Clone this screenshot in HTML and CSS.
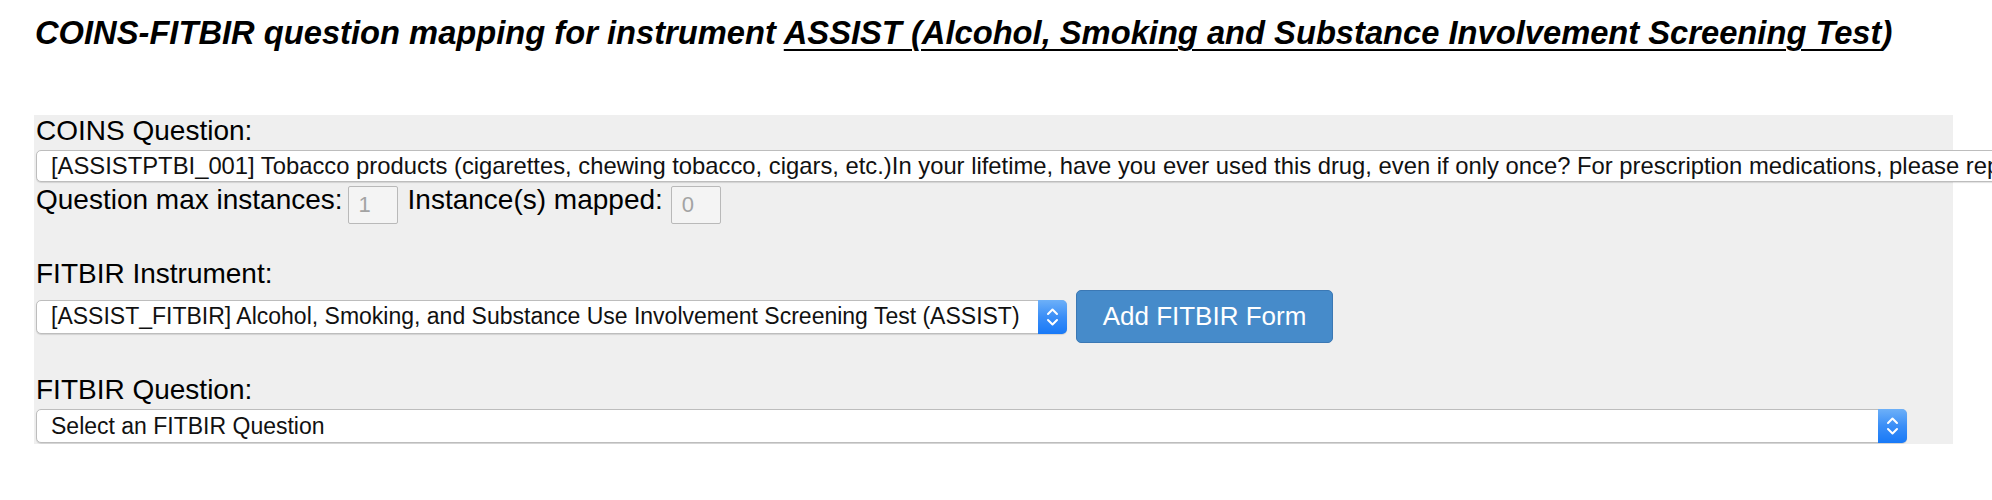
FILE: index.html
```html
<!DOCTYPE html>
<html lang="en">
<head>
<meta charset="utf-8">
<title>COINS-FITBIR question mapping</title>
<link rel="stylesheet" href="styles.css">
</head>
<body>
<h1 class="title">COINS-FITBIR question mapping for instrument <a class="title-link" href="#">ASSIST (Alcohol, Smoking and Substance Involvement Screening Test</a>)</h1>

<div class="panel">
  <div class="label">COINS Question:</div>
  <div class="select select-coins">[ASSISTPTBI_001] Tobacco products (cigarettes, chewing tobacco, cigars, etc.)In your lifetime, have you ever used this drug, even if only once? For prescription medications, please report only if you have used them without a prescription or in ways other than prescribed.</div>

  <div class="instances">
    <span class="label">Question max instances:</span>
    <span class="num-input num-first">1</span>
    <span class="label label-mapped">Instance(s) mapped:</span>
    <span class="num-input num-second">0</span>
  </div>

  <div class="label label-section">FITBIR Instrument:</div>
  <div class="instrument-row">
    <div class="select select-instrument">
      <span class="select-text">[ASSIST_FITBIR] Alcohol, Smoking, and Substance Use Involvement Screening Test (ASSIST)</span>
      <span class="select-arrow"><svg width="29" height="34" viewBox="0 0 29 34"><path d="M10 14 L14.5 9.5 L19 14" fill="none" stroke="#fff" stroke-width="2" stroke-linecap="round" stroke-linejoin="round"/><path d="M10 20 L14.5 24.5 L19 20" fill="none" stroke="#fff" stroke-width="2" stroke-linecap="round" stroke-linejoin="round"/></svg></span>
    </div>
    <button class="btn-add" type="button">Add FITBIR Form</button>
  </div>

  <div class="label label-section2">FITBIR Question:</div>
  <div class="select select-question">
    <span class="select-text">Select an FITBIR Question</span>
    <span class="select-arrow"><svg width="29" height="34" viewBox="0 0 29 34"><path d="M10 14 L14.5 9.5 L19 14" fill="none" stroke="#fff" stroke-width="2" stroke-linecap="round" stroke-linejoin="round"/><path d="M10 20 L14.5 24.5 L19 20" fill="none" stroke="#fff" stroke-width="2" stroke-linecap="round" stroke-linejoin="round"/></svg></span>
  </div>
</div>
</body>
</html>
```

FILE: styles.css
```css
html {
  overflow: hidden;
}

body {
  margin: 0;
  background: #ffffff;
  font-family: "Liberation Sans", Arial, Helvetica, sans-serif;
  color: #000;
}

.title {
  margin: 15px 0 0 35px;
  font-size: 32.7px;
  line-height: 36px;
  font-weight: bold;
  font-style: italic;
  white-space: nowrap;
}

.title-link {
  color: #000;
  text-decoration: underline;
  text-decoration-thickness: 2px;
  text-underline-offset: 5px;
}

.panel {
  margin: 64px 39px 0 34px;
  padding: 2px 0 1px 2px;
  background: #efefef;
}

.label {
  font-size: 28px;
  line-height: 28px;
  white-space: nowrap;
}

.select {
  box-sizing: border-box;
  background: #fff;
  border: 1px solid #bdbdbd;
  border-radius: 5px;
  box-shadow: 0 1px 1px rgba(0, 0, 0, 0.12);
  font-size: 23px;
  color: #111;
  white-space: nowrap;
  display: flex;
  align-items: center;
}

.select-coins {
  margin-top: 5px;
  height: 32px;
  width: 2100px;
  padding-left: 14px;
  overflow: hidden;
  font-size: 23.8px;
  border-radius: 5px 0 0 5px;
}

.select-text {
  flex: 1;
  padding-left: 14px;
  overflow: hidden;
}

.select-arrow {
  align-self: stretch;
  width: 29px;
  display: flex;
  align-items: center;
  justify-content: center;
  margin: -1px -1px -1px 0;
  border-radius: 0 5px 5px 0;
  background: linear-gradient(to bottom, #6db0f8 0%, #3a8ef7 50%, #1879f7 100%);
}

.instances {
  margin-top: 4px;
  height: 38px;
  display: flex;
  align-items: flex-start;
}

.num-input {
  box-sizing: border-box;
  width: 50px;
  height: 38px;
  border: 1px solid #b9b9b9;
  border-radius: 2px;
  background: #f4f4f4;
  color: #a3a3a3;
  font-size: 22px;
  line-height: 36px;
  padding-left: 10px;
}

.num-first {
  margin-left: 5px;
}

.label-mapped {
  margin-left: 10px;
}

.num-second {
  margin-left: 8px;
}

.label-section {
  margin-top: 36px;
}

.instrument-row {
  margin-top: 2px;
  display: flex;
  align-items: center;
}

.select-instrument {
  width: 1031px;
  height: 34px;
}

.btn-add {
  margin-left: 9px;
  width: 257px;
  height: 53px;
  box-sizing: border-box;
  border: 1px solid #3b78b4;
  border-radius: 5px;
  background: #468bca;
  color: #fff;
  font-family: "Liberation Sans", Arial, Helvetica, sans-serif;
  font-size: 26px;
  padding: 0;
}

.label-section2 {
  margin-top: 33px;
}

.select-question {
  margin-top: 5px;
  width: 1871px;
  height: 34px;
}
```
